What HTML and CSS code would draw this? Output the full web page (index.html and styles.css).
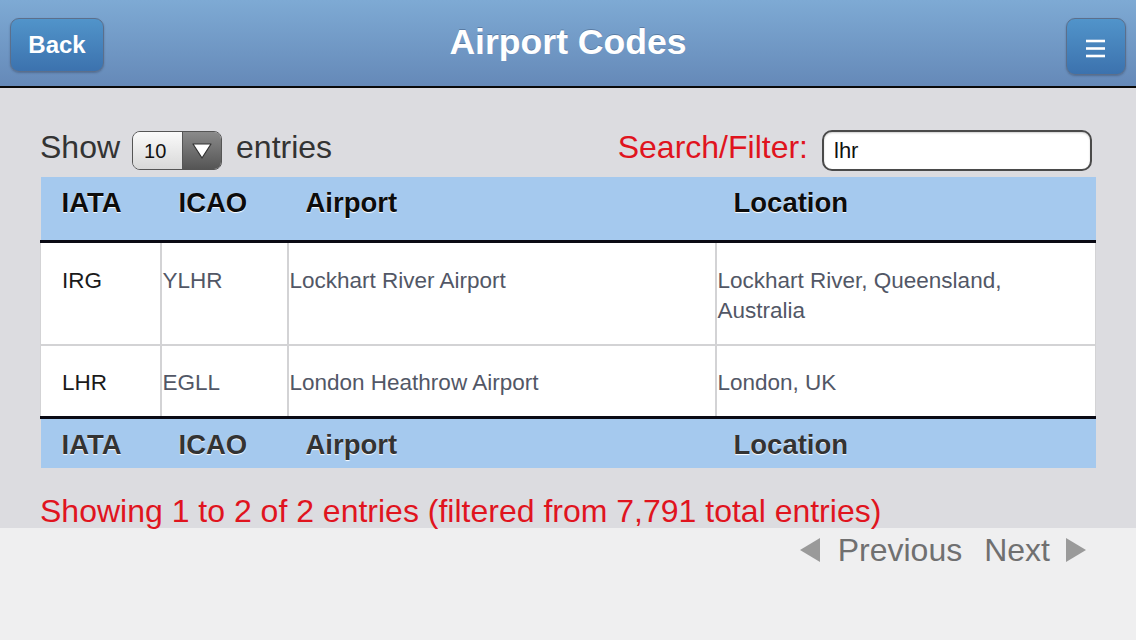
FILE: index.html
```html
<!DOCTYPE html>
<html>
<head>
<meta charset="utf-8">
<title>Airport Codes</title>
<link rel="stylesheet" href="styles.css">
</head>
<body>
<header class="topbar">
  <div class="bar-left"><a class="btn btn-back">Back</a></div>
  <h1 class="title">Airport Codes</h1>
  <div class="bar-right">
    <a class="btn btn-menu">
      <svg width="22" height="20" viewBox="0 0 22 20"><g stroke="#fff" stroke-width="2.6"><line x1="1" y1="3" x2="20" y2="3"/><line x1="1" y1="10.5" x2="20" y2="10.5"/><line x1="1" y1="18" x2="20" y2="18"/></g></svg>
    </a>
  </div>
</header>
<main class="content">
  <div class="controls">
    <div class="length">
      <span class="txt">Show</span>
      <span class="select"><span class="select-val">10</span><span class="select-arrow"><svg width="22" height="18" viewBox="0 0 22 18"><path d="M2 2 L20 2 L11 16 Z" fill="#fff" stroke="#333" stroke-width="1.2" stroke-linejoin="round"/></svg></span></span>
      <span class="txt">entries</span>
    </div>
    <div class="filter">
      <span class="txt filter-label">Search/Filter:</span>
      <span class="input">lhr</span>
    </div>
  </div>
  <table class="grid">
    <colgroup><col class="c1"><col class="c2"><col class="c3"><col class="c4"></colgroup>
    <thead>
      <tr><th>IATA</th><th>ICAO</th><th>Airport</th><th>Location</th></tr>
    </thead>
    <tbody>
      <tr><td class="code">IRG</td><td>YLHR</td><td>Lockhart River Airport</td><td>Lockhart River, Queensland, Australia</td></tr>
      <tr><td class="code">LHR</td><td>EGLL</td><td>London Heathrow Airport</td><td>London, UK</td></tr>
    </tbody>
    <tfoot>
      <tr><th>IATA</th><th>ICAO</th><th>Airport</th><th>Location</th></tr>
    </tfoot>
  </table>
  <p class="info">Showing 1 to 2 of 2 entries (filtered from 7,791 total entries)</p>
</main>
<nav class="paging">
  <span class="tri tri-left"></span>
  <span class="page-link">Previous</span>
  <span class="page-link next">Next</span>
  <span class="tri tri-right"></span>
</nav>
</body>
</html>
```
FILE: styles.css
```css
* { box-sizing: border-box; }
html, body { margin: 0; padding: 0; }
body {
  width: 1136px;
  height: 640px;
  overflow: hidden;
  font-family: "Liberation Sans", Arial, sans-serif;
  background: #efeff0;
  display: flex;
  flex-direction: column;
}
.topbar {
  height: 88px;
  background: linear-gradient(#7eaad4, #6589b8);
  border-bottom: 2px solid #0a0a0a;
  display: grid;
  grid-template-columns: 1fr auto 1fr;
  padding: 18px 10px 0 10px;
}
.bar-left { display: flex; align-items: flex-start; }
.bar-right { display: flex; justify-content: flex-end; align-items: flex-start; }
.title {
  margin: 0;
  margin-top: 4px;
  color: #fff;
  font-size: 35.6px;
  font-weight: bold;
  line-height: 40px;
  text-shadow: 0 -1px 0 rgba(40,60,90,0.35);
}
.btn {
  display: flex;
  align-items: center;
  justify-content: center;
  border: 1.5px solid #5b6f8c;
  border-radius: 9px;
  background: linear-gradient(#5194ca, #3c72ae);
  box-shadow: 0 1px 2px rgba(40,50,70,0.35);
  color: #fff;
  font-weight: bold;
}
.btn-back {
  width: 94px;
  height: 54px;
  font-size: 24px;
}
.btn-menu {
  width: 60px;
  height: 57px;
  padding-top: 2px;
}
.content {
  background: #dcdce0;
  padding: 42px 40px 0 40px;
}
.controls {
  display: flex;
  justify-content: space-between;
  align-items: center;
  height: 41px;
  margin-bottom: 6px;
  font-size: 32px;
  color: #333;
}
.controls .txt { margin-bottom: 6px; }
.length { display: flex; align-items: center; gap: 13px; }
.select {
  display: flex;
  width: 90px;
  height: 39px;
  border: 1.5px solid #555;
  border-radius: 8px;
  overflow: hidden;
  margin-left: -1px;
  margin-right: 1px;
}
.select-val {
  flex: 1;
  background: linear-gradient(#fafafa, #d8d8d8);
  font-size: 20px;
  color: #111;
  display: flex;
  align-items: center;
  padding-left: 11px;
  padding-top: 2px;
}
.select-arrow {
  width: 39px;
  background: linear-gradient(#8a8a8a, #555);
  display: flex;
  align-items: center;
  justify-content: center;
  border-left: 1px solid #555;
}
.filter { display: flex; align-items: center; gap: 14px; margin-right: 4px; }
.filter-label { color: #e0141e; }
.input {
  width: 270px;
  height: 41px;
  background: #fff;
  border: 2px solid #4a4a4a;
  border-radius: 10px;
  box-shadow: inset 0 1px 2px rgba(0,0,0,0.2);
  font-size: 22px;
  color: #111;
  padding: 6px 0 0 10px;
}
.grid {
  width: 1055px;
  border-collapse: collapse;
  table-layout: fixed;
}
.c1 { width: 120px; }
.c2 { width: 127px; }
.c3 { width: 428px; }
.c4 { width: 380px; }
.grid th {
  background: #a5c9ee;
  text-align: left;
  font-size: 27.5px;
  font-weight: bold;
  line-height: 30px;
  padding: 11px 0 22px 18px;
  text-shadow: 0 1px 1px #fff;
  color: #0c0c0c;
}
.grid th:first-child { padding-left: 21px; }
.grid thead tr { border-bottom: 3px solid #0a0a14; }
.grid tfoot tr { border-top: 3px solid #0a0a14; }
.grid tfoot th {
  padding-top: 11px;
  padding-bottom: 8px;
  color: #333;
}
.grid td {
  background: #fff;
  font-size: 22.5px;
  line-height: 30px;
  color: #525766;
  padding: 23px 20px 18px 1px;
  vertical-align: top;
  border: 2px solid #d3d3d5;
}
.grid td:first-child { border-left: 1px solid #d3d3d5; }
.grid td:last-child { border-right: 1px solid #d3d3d5; }
.grid tbody tr:first-child td { border-top: none; height: 102px; }
.grid tbody tr:last-child td { border-bottom: none; height: 70px; padding-top: 22px; }
.grid td.code { padding-left: 21px; color: #1a1a1a; }
.info {
  margin: 0;
  padding: 25px 0 0 0;
  height: 60px;
  font-size: 32px;
  line-height: 37px;
  color: #e0141e;
}
.paging {
  display: flex;
  justify-content: flex-end;
  align-items: center;
  padding: 3px 50px 0 0;
  height: 40px;
  font-size: 32px;
  color: #707070;
}
.page-link { line-height: 40px; }
.page-link.next { margin-left: 22px; }
.tri {
  width: 0;
  height: 0;
  border-top: 12px solid transparent;
  border-bottom: 12px solid transparent;
  filter: blur(0.6px);
}
.tri-left { border-right: 20px solid #9a9a9a; margin-right: 18px; }
.tri-right { border-left: 20px solid #9a9a9a; margin-left: 16px; }
```
